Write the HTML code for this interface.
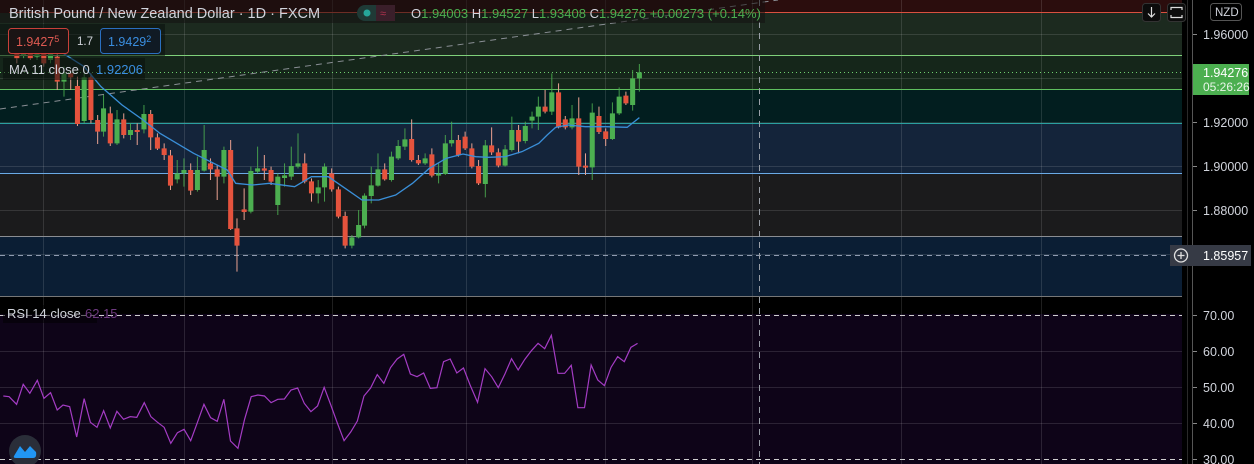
<!DOCTYPE html>
<html><head><meta charset="utf-8"><style>
html,body{margin:0;padding:0;background:#000;width:1254px;height:464px;overflow:hidden}
svg{display:block}
text{font-family:"Liberation Sans",sans-serif}
</style></head><body>
<svg width="1254" height="464" viewBox="0 0 1254 464" xmlns="http://www.w3.org/2000/svg">
<rect width="1254" height="464" fill="#000"/>
<rect x="0" y="0" width="1182" height="13" fill="#2b0d0d"/>
<rect x="0" y="13" width="1182" height="42" fill="#1c2a1f"/>
<rect x="0" y="55" width="1182" height="34" fill="#15261a"/>
<rect x="0" y="89" width="1182" height="35" fill="#021e1f"/>
<rect x="0" y="124" width="1182" height="49" fill="#14243a"/>
<rect x="0" y="173" width="1182" height="63" fill="#1b1b1c"/>
<rect x="0" y="236" width="1182" height="60" fill="#0b1e34"/>
<rect x="0" y="314" width="1186" height="150" fill="#0e0418"/>
<g stroke="rgba(255,255,255,0.12)" stroke-width="1">
<path d="M0 34.5H1182M0 78.5H1182M0 122.5H1182M0 166.5H1182M0 210.5H1182M0 254.5H1182"/>
<path d="M0 351.5H1186M0 387.5H1186M0 423.5H1186"/>
<path d="M43.5 0V464M184.5 0V464M332.5 0V464M466.5 0V464M605.5 0V464M752.5 0V464M901.5 0V464M1041.5 0V464"/>
</g>
<path d="M9 12.5H1182" stroke="#d9503f" stroke-width="1"/>
<path d="M0 55.5H1182" stroke="#7fd07a"/>
<path d="M0 89.5H1182" stroke="#5fbf5f"/>
<path d="M0 123.5H1182" stroke="#2aa0a0"/>
<path d="M0 173.5H1182" stroke="#6aaae6"/>
<path d="M0 236.5H1182" stroke="#8a8d92"/>
<path d="M0 296.5H1186" stroke="#777"/>
<path d="M0 72.5H1188" stroke="#6fcf6f" stroke-dasharray="1 3"/>
<path d="M0 255.5H1170" stroke="#8f9bb0" stroke-dasharray="5 4"/>
<path d="M0 109 L778 0" stroke="#8a8f95" stroke-dasharray="6 5"/>
<path d="M0 315.5H1188M0 459.5H1188" stroke="#cfcfcf" stroke-dasharray="5 4"/>
<path d="M759.5 0V464" stroke="#9aa0a8" stroke-dasharray="6 5"/>
<svg x="0" y="40" width="660" height="260" viewBox="0 0 1568 780" preserveAspectRatio="none">
<path fill="none" stroke="#4caf50" stroke-width="2.4" d="M56 10V55M88 20V60M120 30V70M152 80V170M200 100V250M246 165V290M278 210V315M310 250V300M342 195V280M421 360V430M437 355V440M469 350V455M485 255V395M532 320V430M596 380V520M612 320V400M660 400V525M676 370V440M692 320V420M708 280V385M756 420V490M771 370V485M836 585V625M852 510V595M866 460V565M882 380V490M898 340V440M930 335V425M946 300V360M962 265V330M1010 340V375M1042 370V430M1058 285V405M1073 245V320M1153 300V472M1200 315V380M1216 230V335M1248 245V310M1264 215V265M1279 170V270M1311 100V225M1359 195V268M1407 190V420M1455 187V300M1471 142V225M1503 90V212M1519 72V155" stroke-opacity="0.85"/>
<path fill="none" stroke="#4caf50" stroke-width="12" d="M56 20V45M88 30V50M120 40V60M152 100V125M200 112V243M246 205V275M278 238V310M310 270V285M342 222V268M421 400V418M437 390V400M469 390V450M485 330V392M532 330V410M596 393V515M612 385V395M660 410V495M676 406V414M692 378V410M708 370V380M756 442V460M771 380V442M836 592V617M852 555V592M866 467V557M882 436V468M898 388V437M930 350V420M946 318V355M962 298V320M1010 355V370M1042 401V407M1058 310V402M1073 300V310M1153 316V432M1200 328V377M1216 270V330M1248 258V303M1264 230V242M1279 200V230M1311 157V215M1359 235V262M1407 218V382M1455 220V297M1471 170V220M1503 115V195M1519 97V115"/>
<path fill="none" stroke="#e8a090" stroke-width="2.4" d="M40 0V70M72 20V60M104 25V80M136 30V150M168 90V150M184 110V258M216 100V250M232 225V312M262 200V318M294 220V295M326 250V315M358 210V330M374 280V330M390 310V360M405 330V450M453 370V465M500 355V420M516 375V480M548 300V570M563 535V695M580 445V540M628 345V420M644 380V435M724 340V430M740 415V485M788 385V455M804 440V535M820 515V625M914 370V422M978 238V365M994 345V375M1026 325V412M1089 285V350M1105 275V330M1121 310V385M1137 360V435M1168 262V345M1184 325V382M1232 255V340M1295 150V220M1327 130V265M1343 228V268M1375 172V405M1391 340V405M1423 200V282M1439 265V318M1487 155V195"/>
<path fill="none" stroke="#e5533d" stroke-width="12" d="M40 10V55M72 30V55M104 35V70M136 50V125M168 100V112M184 138V252M216 112V240M232 240V275M262 220V310M294 238V285M326 270V276M358 222V292M374 292V326M390 325V345M405 346V437M453 390V452M500 370V388M516 388V410M548 330V567M563 565V617M580 508V516M628 385V392M644 390V425M724 370V425M740 424V460M788 400V448M804 448V530M820 528V617M914 388V418M978 297V360M994 360V370M1026 343V407M1089 300V345M1105 290V325M1121 325V380M1137 378V430M1168 316V337M1184 337V377M1232 270V305M1295 200V215M1327 157V262M1343 238V262M1375 235V380M1391 377V383M1423 228V276M1439 274V297M1487 167V190"/>
<polyline fill="none" stroke="#3a8fd8" stroke-width="1.3" vector-effect="non-scaling-stroke" points="150,40 200,80 240,140 290,195 340,240 380,280 420,310 460,340 500,365 540,390 560,430 600,435 640,430 700,440 740,410 780,410 820,445 860,480 900,480 940,465 980,430 1020,385 1060,355 1100,342 1130,350 1160,352 1200,350 1240,335 1280,310 1300,285 1320,262 1350,255 1390,260 1440,260 1490,262 1519,233"/>
</svg>
<svg x="0" y="290" width="650" height="174" viewBox="0 0 1568 522" preserveAspectRatio="none">
<polyline fill="none" stroke="#a43cc4" stroke-width="1.2" vector-effect="non-scaling-stroke" points="8,318 22,320 40,343 56,283 72,310 90,271 106,325 122,308 138,360 152,345 168,350 185,441 203,326 218,397 234,412 250,362 266,414 282,364 298,388 314,380 330,382 348,338 364,380 380,397 396,412 412,460 428,428 444,418 460,452 476,398 492,343 508,383 524,394 540,328 556,453 574,475 590,388 606,320 622,315 638,318 654,338 670,328 686,327 702,300 718,294 734,340 750,365 766,348 782,292 798,345 814,400 830,452 846,426 862,393 878,318 894,294 910,254 926,280 942,233 958,207 974,193 990,252 1006,260 1022,249 1038,295 1054,293 1070,215 1086,207 1102,249 1118,234 1134,285 1152,337 1170,236 1186,260 1202,293 1218,252 1234,206 1250,240 1266,208 1282,182 1298,160 1314,176 1330,136 1346,250 1362,250 1378,226 1394,353 1410,353 1426,225 1442,270 1458,287 1474,232 1490,200 1506,215 1522,172 1538,160"/>
</svg>
<rect x="0" y="0" width="765" height="23" fill="rgba(20,16,16,0.55)"/>
<text x="9" y="18" font-size="14.5" fill="#d1d4dc">British Pound / New Zealand Dollar · 1D · FXCM</text>
<rect x="357" y="5" width="38" height="16" rx="8" fill="#1f3a36"/>
<rect x="376" y="5" width="19" height="16" fill="#3a1f2a"/>
<circle cx="367" cy="13" r="3.5" fill="#26a69a"/>
<text x="380" y="17" font-size="11" fill="#b2334f">≈</text>
<text x="411" y="18" font-size="13" fill="#4caf50"><tspan fill="#d1d4dc">O</tspan>1.94003 <tspan fill="#d1d4dc">H</tspan>1.94527 <tspan fill="#d1d4dc">L</tspan>1.93408 <tspan fill="#d1d4dc">C</tspan>1.94276 +0.00273 (+0.14%)</text>
<rect x="0" y="24" width="165" height="32" fill="rgba(10,14,12,0.55)"/>
<rect x="8.5" y="28.5" width="60" height="25" rx="3" fill="#1a1414" stroke="#c8403a"/>
<text x="16" y="46" font-size="12.5" fill="#e05a52">1.9427<tspan font-size="9" dy="-4">5</tspan></text>
<text x="77" y="45" font-size="11.5" fill="#d1d4dc">1.7</text>
<rect x="100.5" y="28.5" width="60" height="25" rx="3" fill="#101a24" stroke="#2a6fc0"/>
<text x="108" y="46" font-size="12.5" fill="#3a8ee0">1.9429<tspan font-size="9" dy="-4">2</tspan></text>
<rect x="3" y="58" width="142" height="22" fill="rgba(10,14,12,0.55)"/>
<text x="9" y="74" font-size="13" fill="#d1d4dc">MA 11 close 0</text>
<text x="96" y="74" font-size="13" fill="#3a8ee0">1.92206</text>
<rect x="3" y="305" width="94" height="18" fill="rgba(0,0,0,0.5)"/>
<text x="7" y="318" font-size="13" fill="#d1d4dc">RSI 14 close</text>
<text x="85" y="318" font-size="13" fill="#6e3a80">62.15</text>
<rect x="1182" y="0" width="72" height="464" fill="#000"/>
<path d="M1187.5 0V464" stroke="#2a2a2a"/>
<path d="M1192.5 0V464" stroke="#555"/>
<g stroke="#888"><path d="M1193 34.5h4M1193 122.5h4M1193 166.5h4M1193 210.5h4M1193 315.5h4M1193 351.5h4M1193 387.5h4M1193 423.5h4M1193 459.5h4"/></g>
<g font-size="12.5" fill="#d1d4dc">
<text x="1203" y="39">1.96000</text>
<text x="1203" y="127">1.92000</text>
<text x="1203" y="171">1.90000</text>
<text x="1203" y="215">1.88000</text>
<text x="1203" y="320">70.00</text>
<text x="1203" y="356">60.00</text>
<text x="1203" y="392">50.00</text>
<text x="1203" y="428">40.00</text>
<text x="1203" y="464">30.00</text>
</g>
<rect x="1210.5" y="3.5" width="31" height="17" rx="3" fill="#000" stroke="#555"/>
<text x="1215" y="16" font-size="11.5" fill="#d1d4dc">NZD</text>
<rect x="1193" y="64" width="56" height="31" fill="#4caf50"/>
<text x="1203" y="77" font-size="12.5" fill="#fff">1.94276</text>
<text x="1203" y="91" font-size="12" fill="#e8f5e9">05:26:26</text>
<rect x="1170" y="245" width="81" height="21" fill="#363a45"/>
<circle cx="1181" cy="255.5" r="6.5" fill="none" stroke="#e0e0e0" stroke-width="1.3"/>
<path d="M1181 252v7M1177.5 255.5h7" stroke="#e0e0e0" stroke-width="1.3"/>
<text x="1203" y="260" font-size="12.5" fill="#fff">1.85957</text>
<rect x="1142.5" y="3.5" width="18" height="18" rx="3" fill="#0c0c0c" stroke="#333"/>
<path d="M1151.5 7v10M1148 13.5l3.5 3.5 3.5-3.5" fill="none" stroke="#ddd" stroke-width="1.2"/>
<rect x="1167.5" y="3.5" width="18" height="18" rx="3" fill="#0c0c0c" stroke="#333"/>
<path d="M1171 10v-2.5h11v2.5M1171 15v2.5h11v-2.5" fill="none" stroke="#ddd" stroke-width="1.2"/>
<circle cx="25" cy="451" r="16" fill="#2a2e39"/>
<path d="M14 456 L20 446 L25 452 L30 446 L36 452 Q37 458 33 458 L16 458 Q13 458 14 456Z" fill="#2196f3"/>
<path d="M15 452 L20 444 L25 450 L30 444 L35 450" fill="none" stroke="#2a2e39" stroke-width="1.2"/>
</svg>
</body></html>
